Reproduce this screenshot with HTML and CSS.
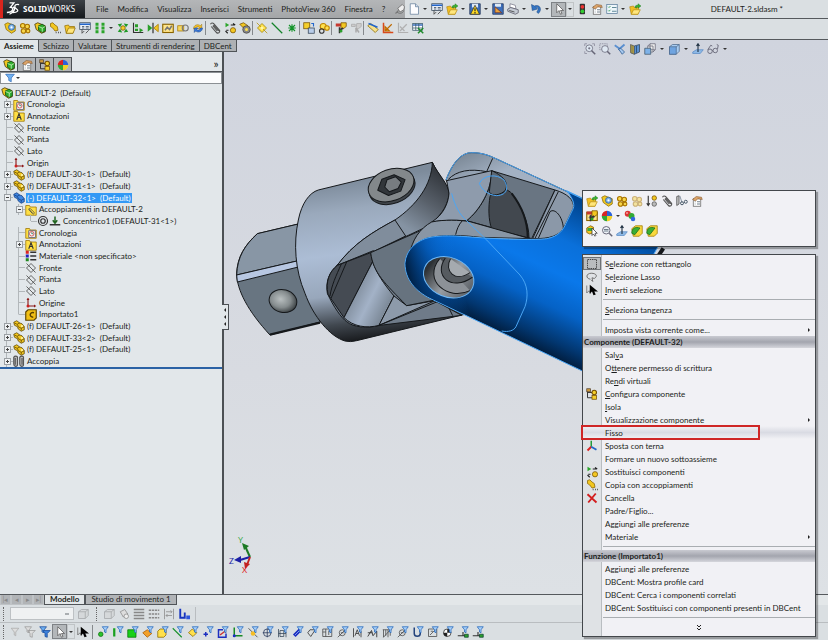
FILE: index.html
```
<!DOCTYPE html>
<html lang="it">
<head>
    <meta charset="UTF-8">
    <meta name="viewport" content="width=device-width, initial-scale=1.0">
    <title>DEFAULT-2.sldasm</title>
    <link rel="stylesheet" href="styles.css">
</head>
<body>
    <!-- icon sprite -->
    <svg class="sprite" aria-hidden="true">
        <symbol id="part" viewBox="0 0 16 16"><path d="M1 3l4-2 4 3 3 1 3 4v4l-4 2-4-3-1-3-4-2z" fill="#f2c720" stroke="#5a4300"/><path d="M2 4l4 2 1 3 4 2v3M6 5l3-1M11 11l4-2" fill="none" stroke="#5a4300"/><circle cx="12" cy="8" r="1.500" fill="#fff3a0"/></symbol>
        <symbol id="part-blue" viewBox="0 0 16 16"><path d="M1 3l4-2 4 3 3 1 3 4v4l-4 2-4-3-1-3-4-2z" fill="#3f86e0" stroke="#123c80"/><path d="M2 4l4 2 1 3 4 2v3M6 5l3-1M11 11l4-2" fill="none" stroke="#123c80"/></symbol>
        <symbol id="asm" viewBox="0 0 16 16"><path d="M1 3l4-2 10 4v8l-5 2-7-5z" fill="#f2c720" stroke="#3c3000"/><path d="M6 5l5-2 4 3v6l-4 2-5-3z" fill="#2fae2f" stroke="#0c4d10"/><path d="M6 6l5 2 4-2M11 8v5" fill="none" stroke="#d8f5c8"/></symbol>
        <symbol id="part-ring" viewBox="0 0 16 16"><path d="M1 3l4-2 10 4v7l-5 3-7-5z" fill="#f2c720" stroke="#8a6a00"/><circle cx="10" cy="7" r="4" fill="#7fb4ea" stroke="#28598f"/><circle cx="10" cy="7" r="1.500" fill="#fff"/></symbol>
        <symbol id="gears" viewBox="0 0 16 16"><g fill="#f7d64a" stroke="#a87400" stroke-width="1.500"><circle cx="5" cy="5" r="3"/><circle cx="11" cy="6" r="3"/><circle cx="6" cy="12" r="3"/><circle cx="12" cy="12" r="2.500"/></g></symbol>
        <symbol id="copy-part" viewBox="0 0 16 16"><path d="M2 2l3-1 3 3 3 2 1 5-4 1-3-4-3-2z" fill="#f2c720" stroke="#8a6400"/><path d="M9 14h1M12 14h1M15 14h1" stroke="#333" stroke-width="2"/></symbol>
        <symbol id="folder" viewBox="0 0 16 16"><path d="M1 5l5-1 1 2h7l-2 9H3z" fill="#f7c92c" stroke="#94700a"/><path d="M3 15l3-7h9l-3 7z" fill="#ffe67c" stroke="#94700a"/></symbol>
        <symbol id="folder-open" viewBox="0 0 16 16"><path d="M1 5l5-1 1 2h6l-1 9H3z" fill="#f3be21" stroke="#b8901c"/><path d="M3 15l3-6h9l-3 6z" fill="#ffe67c" stroke="#b8901c"/><path d="M8 6c0-3 2-3 4-3V1l4 3-4 3V5c-2 0-2 0-2 2z" fill="#38b32f" stroke="#136b13" stroke-width=".5"/></symbol>
        <symbol id="folder-a" viewBox="0 0 16 16"><path d="M1 2h5l1 2h8v11H1z" fill="#ffdf45" stroke="#997200"/><path d="M5 13l3-8 3 8M6 10h4" fill="none" stroke="#333" stroke-width="1.500"/></symbol>
        <symbol id="folder-clock" viewBox="0 0 16 16"><path d="M1 2h5l1 2h8v11H1z" fill="#ffdf45" stroke="#997200"/><rect x="5" y="5" width="9" height="9" fill="#eee" stroke="#557"/><circle cx="9" cy="9" r="3" fill="#fff" stroke="#c33"/><path d="M9 7v2h2" fill="none" stroke="#164"/></symbol>
        <symbol id="folder-clip" viewBox="0 0 16 16"><path d="M1 2h5l1 2h8v11H1z" fill="#ffdf45" stroke="#997200"/><path d="M5 7l5 6c3 1 3-2 1-3L7 6c-2-1-2 1-1 2l4 4" fill="none" stroke="#444"/></symbol>
        <symbol id="plane" viewBox="0 0 16 16"><path d="M2 2l12 12M8 2l6 6-6 6-6-6z" fill="none" stroke="#555" stroke-width="1.200"/></symbol>
        <symbol id="origin" viewBox="0 0 16 16"><path d="M4 2v10h9" fill="none" stroke="#8b1a1a" stroke-width="1.500"/><path d="M2 4l2-3 2 3zM12 10l3 2-3 2z" fill="#8b1a1a"/><circle cx="4" cy="12" r="2" fill="#c22"/></symbol>
        <symbol id="concentric" viewBox="0 0 16 16"><circle cx="8" cy="8" r="6" fill="none" stroke="#333" stroke-width="1.600"/><circle cx="8" cy="8" r="3" fill="none" stroke="#333" stroke-width="1.600"/></symbol>
        <symbol id="fixed" viewBox="0 0 16 16"><path d="M8 2v8M5 7l3 4 3-4" fill="none" stroke="#262" stroke-width="2"/><path d="M1 13h14" stroke="#333" stroke-width="2"/></symbol>
        <symbol id="material" viewBox="0 0 16 16"><rect x="1" y="1" width="4" height="4" fill="#d22"/><rect x="1" y="6" width="4" height="4" fill="#22b"/><rect x="1" y="11" width="4" height="4" fill="#282"/><path d="M7 3h8M7 8h8M7 13h8" stroke="#333" stroke-width="2"/></symbol>
        <symbol id="imported" viewBox="0 0 16 16"><path d="M1 4l3-3h11v11l-3 3H1z" fill="#f2c016" stroke="#5c4300" stroke-width="1.500"/><path d="M12 5c-6-2-7 6-1 6" fill="none" stroke="#5c4300" stroke-width="2"/></symbol>
        <symbol id="clips" viewBox="0 0 16 16"><path d="M1 12V3c1-2 5-2 5 0v10c0 3-5 3-5-1M3 4v9M9 12V3c1-2 5-2 5 0v10c0 3-5 3-5-1M12 4v9" fill="#bbb" stroke="#555" stroke-width="1.500"/></symbol>
        <symbol id="clip" viewBox="0 0 16 16"><path d="M2 3c1-2 3-2 4-1l8 9c1 3-2 5-4 3L3 6M5 5l6 7M6 4l7 8" fill="none" stroke="#555" stroke-width="1.500"/></symbol>
        <symbol id="props" viewBox="0 0 16 16"><rect x="3" y="5" width="10" height="10" fill="#fff" stroke="#666"/><path d="M5 9h1M8 9h4M5 12h1M8 12h4" stroke="#456"/><path d="M2 6l5-4 7 1 1 3-6-1-3 3z" fill="#dca46a" stroke="#7b4c20" stroke-width=".7"/></symbol>
        <symbol id="config" viewBox="0 0 16 16"><path d="M2 2v11h6M2 6h6" fill="none" stroke="#333" stroke-width="1.300"/><rect x="1" y="1" width="5" height="4" fill="#d09c3a" stroke="#543"/><circle cx="11" cy="6" r="3" fill="#f5cf2b" stroke="#765000" stroke-width="1.400"/><rect x="8" y="10" width="6" height="5" fill="#f5cf2b" stroke="#765000"/></symbol>
        <symbol id="ball" viewBox="0 0 16 16"><circle cx="8" cy="8" r="7" fill="#ddd"/><path d="M8 8V1a7 7 0 0 1 7 7z" fill="#2b63d9"/><path d="M8 8H1a7 7 0 0 1 7-7z" fill="#d92424"/><path d="M8 8v7a7 7 0 0 1-7-7z" fill="#32a736"/><path d="M8 8h7a7 7 0 0 1-7 7z" fill="#f2d028"/></symbol>
        <symbol id="balls" viewBox="0 0 16 16"><circle cx="5" cy="5" r="4" fill="#d33"/><circle cx="10" cy="8" r="4" fill="#3a3"/><circle cx="12" cy="12" r="3" fill="#36d"/><circle cx="4" cy="4" r="1" fill="#fff"/></symbol>
        <symbol id="window" viewBox="0 0 16 16"><rect x="1" y="1" width="14" height="9" fill="#e8eef7" stroke="#345"/><path d="M1 3h14" stroke="#26c" stroke-width="2"/><path d="M4 6h3M9 6h4M4 8h3M9 8h4" stroke="#345"/><path d="M4 10v5l3-3M9 15l4-4" fill="none" stroke="#333"/></symbol>
        <symbol id="pattern" viewBox="0 0 16 16"><g fill="#2ba52b"><rect x="2" y="1" width="4" height="4"/><rect x="10" y="1" width="4" height="4"/><rect x="2" y="6" width="4" height="4"/><rect x="10" y="6" width="4" height="4"/><rect x="2" y="11" width="4" height="4"/><rect x="10" y="11" width="4" height="4"/></g></symbol>
        <symbol id="explode" viewBox="0 0 16 16"><circle cx="8" cy="8" r="3" fill="#f5cf2b" stroke="#765000"/><path d="M1 3l6-1-3 5zM15 3l-6-1 3 5zM1 13l6 1-3-5zM15 13l-6 1 3-5z" fill="#1f9a27"/></symbol>
        <symbol id="step" viewBox="0 0 16 16"><path d="M2 1v13h13" fill="none" stroke="#333" stroke-width="1.500"/><path d="M4 3h4v4H4zM10 8l5 3-5 3zM4 9h4v3H4z" fill="#2a9f2a"/></symbol>
        <symbol id="mirror" viewBox="0 0 16 16"><path d="M8 1v14" stroke="#222" stroke-width="1.500"/><path d="M1 3l6 5-6 5z" fill="#2a9f2a"/><path d="M15 3L9 8l6 5z" fill="#f3c722" stroke="#a87800"/></symbol>
        <symbol id="frame" viewBox="0 0 16 16"><rect x="1" y="3" width="14" height="11" fill="#ffe58a" stroke="#8a6400" stroke-width="1.500"/><path d="M4 11l3-4 3 3 3-5" fill="none" stroke="#777" stroke-width="2"/></symbol>
        <symbol id="link" viewBox="0 0 16 16"><rect x="1" y="5" width="8" height="7" fill="#f6d85f" stroke="#a87800"/><circle cx="11" cy="8" r="4" fill="none" stroke="#777" stroke-width="1.500"/></symbol>
        <symbol id="refresh" viewBox="0 0 16 16"><path d="M2 9c0-5 6-7 9-4l2-2v6H8l2-2C7 5 5 7 5 9z" fill="#f5c42b" stroke="#875d00" stroke-width=".6"/><path d="M14 8c0 5-6 7-9 4l-2 2V8h5l-2 2c3 2 5 0 5-2z" fill="#3a78d8" stroke="#123c80" stroke-width=".6"/></symbol>
        <symbol id="replace" viewBox="0 0 16 16"><path d="M2 1l5 3-5 3z" fill="#2aa52a"/><path d="M9 4h5M12 2l3 2M3 11h3M5 15l-3-3" stroke="#222" stroke-width="1.500"/><circle cx="12" cy="11" r="3.500" fill="#f3c722" stroke="#765000"/></symbol>
        <symbol id="wheel" viewBox="0 0 16 16"><path d="M1 3l5-2 6 4-6 3z" fill="#f2c720" stroke="#765000"/><circle cx="10" cy="10" r="5" fill="#888" stroke="#444"/><circle cx="10" cy="10" r="2" fill="#ffe14d"/></symbol>
        <symbol id="tag" viewBox="0 0 16 16"><path d="M8 2l6 6-6 6-6-6z" fill="#ffe14d" stroke="#9a7d00"/><path d="M1 1l14 14" stroke="#b08f00"/><circle cx="8" cy="8" r="2" fill="#fff7a8"/></symbol>
        <symbol id="line" viewBox="0 0 16 16"><path d="M1 1l14 14" stroke="#13832a" stroke-width="1.600"/></symbol>
        <symbol id="star" viewBox="0 0 16 16"><path d="M8 3v10M3 8h10M4 4l8 8M12 4l-8 8" stroke="#13932a" stroke-width="1.500"/></symbol>
        <symbol id="twobox" viewBox="0 0 16 16"><rect x="1" y="1" width="8" height="8" fill="#f5cf2b" stroke="#765000"/><rect x="7" y="8" width="8" height="7" fill="#b8cdea" stroke="#345"/><path d="M11 2h3v4" fill="none" stroke="#26c" stroke-width="1.500"/></symbol>
        <symbol id="rings" viewBox="0 0 16 16"><g fill="#ffe14d" stroke="#c08600" stroke-width="1.500"><circle cx="7" cy="6" r="4"/><circle cx="12" cy="8" r="3"/></g><circle cx="5" cy="12" r="3" fill="none" stroke="#333" stroke-width="1.500"/></symbol>
        <symbol id="tree-y" viewBox="0 0 16 16"><path d="M1 2h7v4H1z" fill="#c6382f"/><path d="M8 1h7v5l-4 3H8z" fill="#f3c722" stroke="#765000"/><path d="M6 7v8M6 11l5-3" stroke="#333" stroke-width="2"/><circle cx="8" cy="12" r="2" fill="#2a9f2a"/></symbol>
        <symbol id="tree-grey" viewBox="0 0 16 16"><path d="M9 2h6v4l-4 3H8zM2 3h5v3H2z" fill="#ccc" stroke="#aaa"/><path d="M8 8l4 6M8 8v6" stroke="#aaa" stroke-width="2"/></symbol>
        <symbol id="ruler" viewBox="0 0 16 16"><path d="M1 5l4-3 10 8-4 4z" fill="#f6e18a" stroke="#876900"/><path d="M2 2l12 5" stroke="#26c" stroke-width="2"/></symbol>
        <symbol id="angle" viewBox="0 0 16 16"><path d="M2 1v13h13" fill="none" stroke="#d84a1b" stroke-width="2"/><path d="M4 12L13 3M4 12V6l6 6z" fill="#f6b42b" stroke="#bf6a00" stroke-width="1.500"/></symbol>
        <symbol id="angle-grey" viewBox="0 0 16 16"><path d="M2 1v13h13M4 12l9-9M4 6l6 6" fill="none" stroke="#b0b0b0" stroke-width="1.600"/></symbol>
        <symbol id="table" viewBox="0 0 16 16"><rect x="1" y="2" width="13" height="9" fill="#fff" stroke="#356"/><path d="M1 4h13" stroke="#3a6fc0" stroke-width="2"/><path d="M5 2v9M9 2v9M1 8h13" stroke="#356"/><path d="M8 8l7 7M15 8l-7 7" stroke="#1f8b2c" stroke-width="2"/></symbol>
        <symbol id="doc" viewBox="0 0 16 16"><path d="M3 1h7l4 4v10H3z" fill="#fdfdff" stroke="#67809c"/><path d="M10 1v4h4" fill="#cfdcec" stroke="#67809c"/></symbol>
        <symbol id="save-warn" viewBox="0 0 16 16"><path d="M1 1h14v14H1z" fill="#3d6fbb" stroke="#235"/><path d="M4 1h8v5H4z" fill="#dce8f5"/><path d="M8 3l6 12H2z" fill="#ffdb24" stroke="#333"/><path d="M8 7v4M8 12v2" stroke="#222" stroke-width="1.500"/></symbol>
        <symbol id="save-edit" viewBox="0 0 16 16"><path d="M1 1h14v14H1z" fill="#3d6fbb" stroke="#235"/><path d="M4 1h8v4H4z" fill="#dce8f5"/><path d="M4 5l9 8H4z" fill="#e9a03a" stroke="#633"/></symbol>
        <symbol id="print" viewBox="0 0 16 16"><path d="M4 1l7 2 1 5-8-2z" fill="#fff" stroke="#778"/><path d="M1 8l4-2 10 3v4l-4 2L1 11z" fill="#c5cbd4" stroke="#556"/><path d="M3 10l7 2" stroke="#333"/></symbol>
        <symbol id="undo" viewBox="0 0 16 16"><path d="M2 2l1 8 7-2-2-2c3-1 4 2 1 6l2 2C17 9 13 1 6 4z" fill="#3475c4" stroke="#1c4680" stroke-width=".7"/></symbol>
        <symbol id="arrow" viewBox="0 0 16 16"><path d="M5 1v12l3-3 2 5 2-1-2-4h4z" fill="#fff" stroke="#555"/></symbol>
        <symbol id="arrow-black" viewBox="0 0 16 16"><path d="M1 2v10l3-3 2 4" fill="none" stroke="#666"/><path d="M5 1v12l3-3 2 5 3-1-2-4h5z" fill="#000"/></symbol>
        <symbol id="traffic" viewBox="0 0 16 16"><rect x="5" y="1" width="7" height="14" rx="1" fill="#333"/><circle cx="8.500" cy="5" r="2.500" fill="#e33"/><circle cx="8.500" cy="11" r="2.500" fill="#3c3"/></symbol>
        <symbol id="checklist" viewBox="0 0 16 16"><rect x="1" y="2" width="14" height="12" fill="#eef6fb" stroke="#5c7e9c"/><path d="M3 5l1 1 2-2M3 10l1 1 2-2" fill="none" stroke="#183"/><path d="M8 6h6M8 11h6" stroke="#367"/></symbol>
        <symbol id="pin" viewBox="0 0 16 16"><path d="M2 14l4-4" stroke="#777" stroke-width="1.500"/><path d="M5 7l6-5 3 3-1 4-5 3z" fill="#eee" stroke="#666"/><path d="M4 12c3 3 8 2 9-2" fill="none" stroke="#666"/></symbol>
        <symbol id="zoom-fit" viewBox="0 0 16 16"><path d="M1 4V1h3M11 1h3v3M1 11v3h3" fill="none" stroke="#889"/><circle cx="7" cy="7" r="4.500" fill="#dfe8f2" stroke="#667"/><circle cx="7" cy="7" r="1.500" fill="#778"/><path d="M10 10l5 5" stroke="#667" stroke-width="2"/></symbol>
        <symbol id="zoom-list" viewBox="0 0 16 16"><circle cx="7" cy="7" r="5" fill="#eef2f8" stroke="#667" stroke-width="1.300"/><path d="M4 6h6M4 8h6" stroke="#456"/><path d="M11 11l4 4" stroke="#667" stroke-width="2"/></symbol>
        <symbol id="zoom-area" viewBox="0 0 16 16"><path d="M1 1h10v8H1z" fill="none" stroke="#889" stroke-dasharray="2 1"/><circle cx="8" cy="8" r="4.500" fill="#dfe8f2" stroke="#667"/><path d="M11 11l4 4" stroke="#667" stroke-width="2"/></symbol>
        <symbol id="wand" viewBox="0 0 16 16"><path d="M1 3l7 5M14 2L6 9" stroke="#5a8fd0" stroke-width="2.500"/><path d="M6 8l3-1 5 5-3 3z" fill="#a6c8ee" stroke="#28568c"/></symbol>
        <symbol id="section" viewBox="0 0 16 16"><path d="M2 2l5 2v11l-5-2z" fill="#e5bf3b" stroke="#555"/><path d="M7 4l7-2v10l-7 3z" fill="#5a8fd0" stroke="#345"/><path d="M4 3v11M10 4v9" stroke="#246"/></symbol>
        <symbol id="cube" viewBox="0 0 16 16"><path d="M2 5l4-3h9v9l-4 4H2z" fill="#a9cdf2" stroke="#4d6a8c"/><path d="M2 5h9v10H2z" fill="#6fa4e0" stroke="#4d6a8c"/><path d="M11 5l4-3" stroke="#4d6a8c"/></symbol>
        <symbol id="views" viewBox="0 0 16 16"><path d="M5 4l3-3h7v8l-3 3H5z" fill="#eee" stroke="#667"/><path d="M5 4h7v8M8 1v8h7" fill="none" stroke="#667"/><path d="M1 7h8v8H1z" fill="#7eb2e8" stroke="#456"/></symbol>
        <symbol id="normal" viewBox="0 0 16 16"><path d="M1 12l5-3h9l-4 5H1z" fill="#8db9e6" stroke="#5c8cc6"/><path d="M8 12V2M6 4l2-3 2 3" fill="none" stroke="#234" stroke-width="1.500"/></symbol>
        <symbol id="glasses" viewBox="0 0 16 16"><g fill="none" stroke="#667" stroke-width="1.200"><circle cx="4" cy="11" r="3"/><circle cx="11" cy="10" r="3"/><path d="M1 9l4-6 2 1M14 8l1-5-2-1M7 10h1"/></g></symbol>
        <symbol id="hide" viewBox="0 0 16 16"><path d="M1 2l3-1v11l-3 2z" fill="#ccc" stroke="#444"/><path d="M5 1l3 9" stroke="#678"/><circle cx="8" cy="11" r="2" fill="none" stroke="#456" stroke-width="1.300"/><circle cx="13" cy="9" r="2" fill="none" stroke="#456" stroke-width="1.300"/></symbol>
        <symbol id="swap" viewBox="0 0 16 16"><path d="M3 1v12M1 11l2 3 2-3" fill="none" stroke="#333" stroke-width="1.500"/><circle cx="11" cy="4" r="3" fill="#f2c720" stroke="#765000"/><circle cx="11" cy="12" r="3" fill="#bbb" stroke="#555"/></symbol>
        <symbol id="select-part" viewBox="0 0 16 16"><path d="M1 4l5-3 4 2v7l-5 2-4-2z" fill="#f2c720" stroke="#765000"/><path d="M2 4h6v4H2z" fill="#39a83a"/><path d="M8 4v10l2-2 2 3 1-1-1-3h3z" fill="#fff" stroke="#333"/></symbol>
        <symbol id="green-part" viewBox="0 0 16 16"><path d="M1 5l5-4h9v10l-4 4H3z" fill="#f8d83e" stroke="#a07a00"/><path d="M1 11C1 4 6 2 12 4L5 13z" fill="#39ae35" stroke="#186b1b"/></symbol>
        <symbol id="marquee" viewBox="0 0 16 16"><rect x="2" y="2" width="12" height="12" fill="none" stroke="#222" stroke-dasharray="2 1"/></symbol>
        <symbol id="lasso" viewBox="0 0 16 16"><path d="M6 11C-1 10 0 3 7 3s9 4 4 7L8 9l1 5-2-2" fill="none" stroke="#666" stroke-width="1.200"/></symbol>
        <symbol id="triad" viewBox="0 0 16 16"><path d="M7 9V1" stroke="#229b39" stroke-width="2"/><path d="M7 9l-5 5" stroke="#d22" stroke-width="2.500"/><path d="M7 9l7 4" stroke="#2467c8" stroke-width="2.500"/></symbol>
        <symbol id="cross" viewBox="0 0 16 16"><path d="M2 3l12 11M13 2L3 14" stroke="#d21e1e" stroke-width="2.500"/></symbol>
        <symbol id="funnel" viewBox="0 0 16 16"><path d="M1 2h14L10 8v6l-4-2V8z" fill="#6fb1f2" stroke="#1e5cab"/></symbol>
        <symbol id="funnel-grey" viewBox="0 0 16 16"><path d="M3 3h10L9 8v5l-2-1V8z" fill="#ddd" stroke="#aaa"/></symbol>
        <symbol id="funnels" viewBox="0 0 16 16"><path d="M1 1h9L7 5v4L4 8V5z" fill="#6fb1f2" stroke="#17499a"/><path d="M5 6h10l-4 4v5l-3-1v-4z" fill="#3a7fd9" stroke="#17499a"/></symbol>
        <symbol id="funnels-grey" viewBox="0 0 16 16"><path d="M1 1h9L7 5v4L4 8V5zM5 6h10l-4 4v5l-3-1v-4z" fill="#ddd" stroke="#999"/></symbol>
        <!-- small filter that sits on the upper right of each filter button -->
        <symbol id="f" viewBox="0 0 16 16"><path d="M7 1h8l-3 4v4l-2-1V5z" fill="#a9d1fa" stroke="#2265bb"/></symbol>
        <symbol id="s-dot" viewBox="0 0 16 16"><circle cx="5" cy="11" r="3" fill="#2cc42c" stroke="#107010"/></symbol>
        <symbol id="s-edge" viewBox="0 0 16 16"><path d="M3 3v11" stroke="#19a01e" stroke-width="3"/></symbol>
        <symbol id="s-face" viewBox="0 0 16 16"><path d="M1 5h11v10H1z" fill="#18d018" stroke="#087008"/></symbol>
        <symbol id="s-surf" viewBox="0 0 16 16"><path d="M1 9l6-4 6 5-6 5z" fill="#f2a02a" stroke="#a85a00"/></symbol>
        <symbol id="s-body" viewBox="0 0 16 16"><path d="M1 7l3-3h8v8l-3 3H1z" fill="#ffe04a" stroke="#8a6a00"/></symbol>
        <symbol id="s-line" viewBox="0 0 16 16"><path d="M1 3l12 12" stroke="#19902a" stroke-width="1.500"/></symbol>
        <symbol id="s-plane" viewBox="0 0 16 16"><path d="M7 4l6 5-5 5-6-5z" fill="#ffe04a" stroke="#8a6a00"/></symbol>
        <symbol id="s-point" viewBox="0 0 16 16"><path d="M5 8v6M2 11h6" stroke="#1d2fc0" stroke-width="2"/></symbol>
        <symbol id="s-sketch" viewBox="0 0 16 16"><path d="M8 5H2v10h10v-5" fill="none" stroke="#1d2fc0" stroke-width="2"/><path d="M4 12l8-6" stroke="#c33" stroke-width="2"/></symbol>
        <symbol id="s-axes" viewBox="0 0 16 16"><path d="M3 2v11h11" fill="none" stroke="#178a22" stroke-width="2"/><circle cx="3" cy="13" r="2" fill="#1d2fc0"/></symbol>
        <symbol id="s-mid" viewBox="0 0 16 16"><path d="M2 3l12 12" stroke="#333"/><circle cx="8" cy="10" r="3" fill="#f5bd23"/></symbol>
        <symbol id="s-target" viewBox="0 0 16 16"><circle cx="7" cy="9" r="5" fill="none" stroke="#235"/><path d="M7 3v12M1 9h12" stroke="#235"/></symbol>
        <symbol id="s-dim" viewBox="0 0 16 16"><path d="M2 4v11M2 10h10M12 8v7M4 6h5v8H4z" fill="none" stroke="#345"/></symbol>
        <symbol id="s-pen" viewBox="0 0 16 16"><path d="M3 13l8-8" stroke="#1d2fc0" stroke-width="5"/><path d="M4 12l7-7" stroke="#9bf"/></symbol>
        <symbol id="s-check" viewBox="0 0 16 16"><path d="M1 9l4 5 6-9H4z" fill="none" stroke="#444" stroke-width="1.200"/></symbol>
        <symbol id="s-note" viewBox="0 0 16 16"><path d="M1 4h12v10H1zM5 4v10M9 6v6M1 8h4" fill="none" stroke="#444"/></symbol>
        <symbol id="s-bal" viewBox="0 0 16 16"><circle cx="7" cy="9" r="4" fill="none" stroke="#444"/><path d="M1 15l11-11M5 9h4" stroke="#444"/></symbol>
        <symbol id="s-datum" viewBox="0 0 16 16"><path d="M2 3v12M4 13l3-8 3 8M5 10h4M12 7v8" fill="none" stroke="#444" stroke-width="1.200"/></symbol>
        <symbol id="s-weld" viewBox="0 0 16 16"><path d="M1 14l5-8 2 7 5-6v8M1 9h6" fill="none" stroke="#333" stroke-width="1.200"/></symbol>
        <symbol id="s-hatch" viewBox="0 0 16 16"><path d="M1 5h12M2 5v10M5 5v8M8 5v10M11 5v8M2 15l9-10" fill="none" stroke="#444"/></symbol>
        <symbol id="s-u" viewBox="0 0 16 16"><path d="M3 2v8c0 5 8 5 8 0V6" fill="none" stroke="#24447c" stroke-width="2"/></symbol>
        <symbol id="s-box" viewBox="0 0 16 16"><path d="M2 4h11v10H2zM4 12l6-6M5 7h3" fill="none" stroke="#444"/></symbol>
        <symbol id="s-mass" viewBox="0 0 16 16"><circle cx="7" cy="9" r="5" fill="#fff" stroke="#222"/><path d="M7 4a5 5 0 0 1 5 5H7zM7 14a5 5 0 0 1-5-5h5z" fill="#222"/></symbol>
        <symbol id="s-conn" viewBox="0 0 16 16"><path d="M1 13h11M8 8v5" stroke="#333" stroke-width="1.500"/><path d="M10 11h5v4h-5z" fill="#2ba12b" stroke="#143"/></symbol>
        <symbol id="cube-grey" viewBox="0 0 16 16"><path d="M2 5l4-3h9v8l-4 4H2zM2 5h9v9M11 5l4-3" fill="#d5d8da" stroke="#a3a6a8"/></symbol>
        <symbol id="paint" viewBox="0 0 16 16"><path d="M3 5l6-3 4 6-6 4z" fill="#ddd" stroke="#888"/><circle cx="11" cy="11" r="3" fill="#eee" stroke="#888"/></symbol>
        <symbol id="lines" viewBox="0 0 16 16"><path d="M1 2h14M1 6h14M1 10h14M1 14h14" stroke="#888" stroke-width="2"/></symbol>
        <symbol id="dashes" viewBox="0 0 16 16"><path d="M1 3h14M1 8h14M1 13h14" stroke="#888" stroke-width="2" stroke-dasharray="3 1"/></symbol>
        <symbol id="fit" viewBox="0 0 16 16"><path d="M2 1v14M14 1v14M4 5h8M4 10h8M10 3l2 2-2 2M6 8l-2 2 2 2" fill="none" stroke="#888"/></symbol>
        <symbol id="ucs" viewBox="0 0 16 16"><path d="M3 1v12h6V6" fill="none" stroke="#1735c0" stroke-width="2.500"/><path d="M11 10h5v5h-5z" fill="#2e57dd"/></symbol>
    </svg>

    <header class="titlebar">
        <div class="logo">
            <svg viewBox="0 0 16 16" aria-hidden="true"><path d="M4 1h5L5 6c5 0 3 6-4 6M8 6c4 0 1 6-4 8M15 3c-6-1-6 3-3 5s1 4-4 4" fill="none" stroke="#fff" stroke-width="1.500"/></svg>
            <span><b>SOLID</b>WORKS</span>
        </div>
        <nav class="menubar">
            <button>File</button>
            <button>Modifica</button>
            <button>Visualizza</button>
            <button>Inserisci</button>
            <button>Strumenti</button>
            <button>PhotoView 360</button>
            <button>Finestra</button>
            <button>?</button>
            <button aria-label="Blocca menu"><svg class="icon"><use href="#pin"/></svg></button>
        </nav>
        <div class="toolbar quick">
            <button aria-label="Nuovo"><svg class="icon"><use href="#doc"/></svg></button>
            <button class="drop" aria-label="Altro"></button>
            <button aria-label="Finestra documento"><svg class="icon"><use href="#window"/></svg></button>
            <button aria-label="Apri"><svg class="icon"><use href="#folder-open"/></svg></button>
            <button class="drop" aria-label="Altro"></button>
            <button aria-label="Salva"><svg class="icon"><use href="#save-warn"/></svg></button>
            <button class="drop" aria-label="Altro"></button>
            <button aria-label="Salva con nome"><svg class="icon"><use href="#save-edit"/></svg></button>
            <button aria-label="Stampa"><svg class="icon"><use href="#print"/></svg></button>
            <button class="drop" aria-label="Altro"></button>
            <button aria-label="Annulla"><svg class="icon"><use href="#undo"/></svg></button>
            <button class="drop" aria-label="Altro"></button>
            <button class="pressed" aria-label="Seleziona"><svg class="icon"><use href="#arrow"/></svg></button>
            <button class="drop boxed" aria-label="Altro"></button>
            <button aria-label="Ricostruisci"><svg class="icon"><use href="#traffic"/></svg></button>
            <button aria-label="Proprietà"><svg class="icon"><use href="#props"/></svg></button>
            <button aria-label="Opzioni"><svg class="icon"><use href="#checklist"/></svg></button>
            <button class="drop" aria-label="Altro"></button>
            <button aria-label="Apri cartella"><svg class="icon"><use href="#folder-open"/></svg></button>
        </div>
        <h1>DEFAULT-2.sldasm *</h1>
    </header>

    <div class="toolbar assembly">
        <button aria-label="Inserisci componente"><svg class="icon"><use href="#part-ring"/></svg></button>
        <button aria-label="Nuova parte"><svg class="icon"><use href="#gears"/></svg></button>
        <button aria-label="Nuovo assieme"><svg class="icon"><use href="#asm"/></svg></button>
        <button aria-label="Copia con accoppiamenti"><svg class="icon"><use href="#copy-part"/></svg></button>
        <button aria-label="Apri parte"><svg class="icon"><use href="#folder"/></svg></button>
        <button aria-label="Finestra"><svg class="icon"><use href="#window"/></svg></button>
        <button aria-label="Ripetizione"><svg class="icon"><use href="#pattern"/></svg></button>
        <button class="drop" aria-label="Altro"></button>
        <button aria-label="Vista esplosa"><svg class="icon"><use href="#explode"/></svg></button>
        <button aria-label="Schizzo linee"><svg class="icon"><use href="#step"/></svg></button>
        <button aria-label="Specchia"><svg class="icon"><use href="#mirror"/></svg></button>
        <button aria-label="Interferenza"><svg class="icon"><use href="#frame"/></svg></button>
        <button aria-label="Collega"><svg class="icon"><use href="#link"/></svg></button>
        <button aria-label="Aggiorna"><svg class="icon"><use href="#refresh"/></svg></button>
        <span class="sep"></span>
        <button aria-label="Accoppia"><svg class="icon"><use href="#clip"/></svg></button>
        <button aria-label="Sostituisci"><svg class="icon"><use href="#replace"/></svg></button>
        <button aria-label="Ruota"><svg class="icon"><use href="#wheel"/></svg></button>
        <span class="sep"></span>
        <button aria-label="Piano"><svg class="icon"><use href="#tag"/></svg></button>
        <button aria-label="Asse"><svg class="icon"><use href="#line"/></svg></button>
        <button aria-label="Punto"><svg class="icon"><use href="#star"/></svg></button>
        <span class="sep"></span>
        <button aria-label="Sposta"><svg class="icon"><use href="#twobox"/></svg></button>
        <button aria-label="Rotazione"><svg class="icon"><use href="#rings"/></svg></button>
        <span class="sep"></span>
        <button aria-label="Esplodi"><svg class="icon"><use href="#tree-y"/></svg></button>
        <button aria-label="Linee esplose" disabled><svg class="icon"><use href="#tree-grey"/></svg></button>
        <span class="sep"></span>
        <button aria-label="Misura"><svg class="icon"><use href="#ruler"/></svg></button>
        <button aria-label="Schizzo"><svg class="icon"><use href="#angle"/></svg></button>
        <button aria-label="Schizzo 3D" disabled><svg class="icon"><use href="#angle-grey"/></svg></button>
        <button aria-label="Tabella"><svg class="icon"><use href="#table"/></svg></button>
    </div>

    <main class="workspace">
        <aside class="side">
            <div class="command-tabs">
                <button class="active">Assieme</button>
                <button>Schizzo</button>
                <button>Valutare</button>
                <button>Strumenti di rendering</button>
                <button>DBCent</button>
            </div>
            <div class="panel">
                <div class="panel-tabs">
                    <button class="active" aria-label="Albero"><svg class="icon"><use href="#asm"/></svg></button>
                    <button aria-label="Proprietà"><svg class="icon"><use href="#props"/></svg></button>
                    <button aria-label="Configurazioni"><svg class="icon"><use href="#config"/></svg></button>
                    <button aria-label="Aspetti"><svg class="icon"><use href="#ball"/></svg></button>
                    <button class="expand">»</button>
                </div>
                <label class="filter">
                    <svg class="icon"><use href="#funnel"/></svg>
                    <span class="caret"></span>
                    <input type="text" aria-label="Filtro">
                </label>
                <ul class="tree">
                    <li><svg class="icon"><use href="#asm"/></svg><span>DEFAULT-2&nbsp; (Default)</span></li>
                    <li><button class="node plus" aria-label="Espandi"></button><svg class="icon"><use href="#folder-clock"/></svg><span>Cronologia</span></li>
                    <li><button class="node plus" aria-label="Espandi"></button><svg class="icon"><use href="#folder-a"/></svg><span>Annotazioni</span></li>
                    <li><i class="node"></i><svg class="icon"><use href="#plane"/></svg><span>Fronte</span></li>
                    <li><i class="node"></i><svg class="icon"><use href="#plane"/></svg><span>Pianta</span></li>
                    <li><i class="node"></i><svg class="icon"><use href="#plane"/></svg><span>Lato</span></li>
                    <li><i class="node"></i><svg class="icon"><use href="#origin"/></svg><span>Origin</span></li>
                    <li><button class="node plus" aria-label="Espandi"></button><svg class="icon"><use href="#part"/></svg><span>(f) DEFAULT-30&lt;1&gt;&nbsp; (Default)</span></li>
                    <li><button class="node plus" aria-label="Espandi"></button><svg class="icon"><use href="#part"/></svg><span>(f) DEFAULT-31&lt;1&gt;&nbsp; (Default)</span></li>
                    <li><button class="node minus" aria-label="Comprimi"></button><svg class="icon"><use href="#part-blue"/></svg><span class="selected">(-) DEFAULT-32&lt;1&gt;&nbsp; (Default)</span></li>
                    <li><i class="guide"></i><button class="node minus" aria-label="Comprimi"></button><svg class="icon"><use href="#folder-clip"/></svg><span>Accoppiamenti in DEFAULT-2</span></li>
                    <li><i class="guide"></i><i class="guide"></i><i class="node last"></i><svg class="icon"><use href="#concentric"/></svg><svg class="icon"><use href="#fixed"/></svg><span>Concentrico1 (DEFAULT-31&lt;1&gt;)</span></li>
                    <li><i class="guide"></i><i class="node"></i><svg class="icon"><use href="#folder-clock"/></svg><span>Cronologia</span></li>
                    <li><i class="guide"></i><button class="node plus" aria-label="Espandi"></button><svg class="icon"><use href="#folder-a"/></svg><span>Annotazioni</span></li>
                    <li><i class="guide"></i><i class="node"></i><svg class="icon"><use href="#material"/></svg><span>Materiale &lt;non specificato&gt;</span></li>
                    <li><i class="guide"></i><i class="node"></i><svg class="icon"><use href="#plane"/></svg><span>Fronte</span></li>
                    <li><i class="guide"></i><i class="node"></i><svg class="icon"><use href="#plane"/></svg><span>Pianta</span></li>
                    <li><i class="guide"></i><i class="node"></i><svg class="icon"><use href="#plane"/></svg><span>Lato</span></li>
                    <li><i class="guide"></i><i class="node"></i><svg class="icon"><use href="#origin"/></svg><span>Origine</span></li>
                    <li><i class="guide"></i><i class="node last"></i><svg class="icon"><use href="#imported"/></svg><span>Importato1</span></li>
                    <li><button class="node plus" aria-label="Espandi"></button><svg class="icon"><use href="#part"/></svg><span>(f) DEFAULT-26&lt;1&gt;&nbsp; (Default)</span></li>
                    <li><button class="node plus" aria-label="Espandi"></button><svg class="icon"><use href="#part"/></svg><span>(f) DEFAULT-33&lt;2&gt;&nbsp; (Default)</span></li>
                    <li><button class="node plus" aria-label="Espandi"></button><svg class="icon"><use href="#part"/></svg><span>(f) DEFAULT-25&lt;1&gt;&nbsp; (Default)</span></li>
                    <li><button class="node plus" aria-label="Espandi"></button><svg class="icon"><use href="#clips"/></svg><span>Accoppia</span></li>
                </ul>
            </div>
            <button class="collapse" aria-label="Chiudi pannello"><i></i><i></i><i></i></button>
        </aside>

        <section class="viewport">
            <svg class="model" viewBox="224 40 604 555" preserveAspectRatio="xMinYMin slice" role="img" aria-label="Giunto cardanico">
                <defs>
                    <linearGradient id="yoke" gradientUnits="userSpaceOnUse" x1="360" y1="120" x2="420" y2="600"><stop offset="0" stop-color="#7d8b9b"/><stop offset=".18" stop-color="#9aa9bc"/><stop offset=".45" stop-color="#acbdd5"/><stop offset=".7" stop-color="#98a7bb"/><stop offset=".88" stop-color="#414850"/><stop offset="1" stop-color="#17191c"/></linearGradient>
                    <linearGradient id="ear" gradientUnits="userSpaceOnUse" x1="650" y1="110" x2="540" y2="270"><stop offset="0" stop-color="#32363c"/><stop offset=".5" stop-color="#59616b"/><stop offset="1" stop-color="#8593a3"/></linearGradient>
                    <linearGradient id="bore" gradientUnits="userSpaceOnUse" x1="350" y1="440" x2="470" y2="500"><stop offset="0" stop-color="#707c89"/><stop offset=".6" stop-color="#a3b2c7"/><stop offset="1" stop-color="#7e8b9a"/></linearGradient>
                    <linearGradient id="top" gradientUnits="userSpaceOnUse" x1="700" y1="40" x2="740" y2="130"><stop offset="0" stop-color="#7b8896"/><stop offset="1" stop-color="#a3b1c3"/></linearGradient>
                    <linearGradient id="blue" gradientUnits="userSpaceOnUse" x1="1010" y1="170" x2="800" y2="610"><stop offset="0" stop-color="#004590"/><stop offset=".25" stop-color="#0a70da"/><stop offset=".45" stop-color="#0a78ea"/><stop offset=".65" stop-color="#0562c6"/><stop offset=".84" stop-color="#02366f"/><stop offset="1" stop-color="#000a18"/></linearGradient>
                    <linearGradient id="nose" gradientUnits="userSpaceOnUse" x1="535" y1="430" x2="690" y2="395"><stop offset="0" stop-color="#001c3c"/><stop offset=".5" stop-color="#0352a8" stop-opacity=".5"/><stop offset="1" stop-color="#0a78ea" stop-opacity="0"/></linearGradient>
                    <linearGradient id="hole" gradientUnits="userSpaceOnUse" x1="590" y1="400" x2="730" y2="440"><stop offset="0" stop-color="#2d3135"/><stop offset=".5" stop-color="#989da3"/><stop offset="1" stop-color="#5b6066"/></linearGradient>
                    <radialGradient id="sphere" cx=".4" cy=".45" r=".6"><stop offset="0" stop-color="#b9bfc0"/><stop offset=".6" stop-color="#858c8e"/><stop offset="1" stop-color="#3d4346"/></radialGradient>
                </defs>
                <g transform="translate(230 140) scale(.33333)" stroke="#15181b" stroke-width="3" stroke-linejoin="round" fill="none">
                    <!-- square shank -->
                    <path d="M82 281L205 252L275 545L120 585C55 515 20 450 20 400C22 350 45 315 82 281Z" fill="#687581"/>
                    <path d="M82 281L205 252V362L20 405C22 350 45 315 82 281Z" fill="#8896a5"/>
                    <path d="M20 405L205 362V381L22 426Z" fill="#b7c7e2"/>
                    <path d="M120 584L270 548" stroke-width="7"/>
                    <ellipse cx="159" cy="483" rx="42" ry="34" fill="url(#sphere)" transform="rotate(15 159 483)"/>
                    <!-- left yoke -->
                    <path d="M607 67L265 150C238 158 215 190 205 240C190 310 195 390 225 460C250 530 300 590 345 603Q360 607 380 602L700 524L640 470L580 262C640 230 655 190 657 160C650 130 625 105 607 67Z" fill="url(#yoke)"/>
                    <path d="M607 67C625 105 655 130 657 160C655 200 625 240 580 265L430 335L320 378C370 310 430 275 495 240C560 195 605 135 607 67Z" fill="url(#ear)"/>
                    <path d="M320 378C370 310 430 275 495 240L527 288L430 335Z" fill="#808d9c"/>
                    <path d="M322 376C298 395 286 425 292 460C310 500 335 535 350 545C370 562 410 566 450 556L695 526L610 480L430 332Z" fill="#6f7b89"/>
                    <path d="M322 376L422 338L428 365L342 533L294 463C286 425 298 395 322 376Z" fill="#454b53"/>
                    <path d="M334 372C318 408 305 435 300 468M350 366L303 475"/>
                    <path d="M428 365L342 533C370 560 410 566 447 556L492 468C460 430 440 400 428 365Z" fill="url(#bore)"/>
                    <path d="M492 468L530 497L615 482L447 556Z" fill="#8d9aaa"/>
                    <path d="M655 500L668 527M447 556L625 484"/>
                    <path d="M422 338L580 268L640 300L615 480L530 497C465 430 430 400 422 338Z" fill="#67737f"/>
                    <!-- screw -->
                    <g transform="rotate(-20 484 137)">
                        <ellipse cx="484" cy="144" rx="71" ry="47" fill="#40454a"/>
                        <ellipse cx="484" cy="135" rx="71" ry="47" fill="#83888b"/>
                        <path d="M441 136L464 109H503L529 134L505 162H466Z" fill="#32363a"/>
                        <path d="M464 134L478 116H505L516 137L500 152H472Z" fill="#777c80"/>
                    </g>
                    <!-- rear yoke -->
                    <path d="M648 120C665 75 690 38 725 38C760 38 780 48 800 57L1055 175V300L900 296L720 245Z" fill="url(#top)"/>
                    <path d="M788 55L770 95M655 118C680 92 720 85 770 95"/>
                    <path d="M785 92L975 150L905 296L710 242C750 210 785 150 785 92Z" fill="#697582"/>
                    <path d="M780 170C795 142 825 140 845 160C875 200 897 250 897 294L785 266C775 240 775 200 780 170Z" fill="#42484f"/>
                    <path d="M845 160C880 205 893 245 893 292" stroke-width="6"/>
                    <path d="M975 150C1010 160 1035 180 1030 205L1003 260C990 287 960 297 908 296Z" fill="#8b98a8"/>
                    <path d="M925 295L960 215C975 203 998 230 1000 264M985 155L915 295"/>
                    <path d="M650 122L785 92C785 150 750 210 710 242C670 240 640 240 605 246C640 225 655 190 657 160Z" fill="#8e9bac"/>
                    <path d="M785 92C825 110 840 135 822 155C800 170 780 165 778 155L785 92Z" fill="#5c6772"/>
                    <path d="M605 246C640 238 690 240 720 245L900 296L750 292C700 286 640 282 590 295C560 305 545 325 538 348C545 300 570 265 605 246Z" fill="#8996a5"/>
                    <path d="M697 242C685 255 680 270 677 284"/>
                    <!-- selected yoke -->
                    <path d="M525 370C528 330 560 300 600 292C650 283 700 290 750 293C820 298 920 300 950 296C985 290 1000 270 1008 250L1030 205C1035 190 1025 170 1010 152L1100 195L1295 300L1270 345V820L1055 692L600 475C560 455 525 420 525 370Z" fill="url(#blue)" stroke="#4aa6f5"/>
                    <path d="M527 370C530 330 560 302 600 294C650 285 700 292 750 295L800 568L600 473C560 453 527 420 527 370Z" fill="url(#nose)" stroke="none"/>
                    <path d="M1300 325L1270 370" stroke-width="12"/>
                    <g transform="rotate(22 656 412)">
                        <ellipse cx="656" cy="412" rx="78" ry="59" fill="url(#hole)" stroke="#6fb9f8"/>
                        <path d="M610 370C585 450 680 480 730 425" fill="#8c9197"/>
                        <path d="M625 362C610 425 680 450 722 385" fill="#565b60"/>
                        <path d="M640 358C635 400 680 420 710 375" fill="#a5aaaf"/>
                    </g>
                    <g stroke="#4aa6f5" stroke-width="3">
                        <path d="M648 120C665 75 690 38 725 38C760 38 780 48 800 57L1055 175"/>
                        <path d="M665 160C675 200 690 225 710 242L770 300L870 405C895 435 895 470 885 500L858 560C852 572 835 577 815 573"/>
                        <path d="M748 130C755 150 775 165 800 167C835 165 835 140 822 120C800 100 760 105 748 130"/>
                    </g>
                </g>
                <!-- axis triad -->
                <g stroke-width="2">
                    <path d="M250 557L245 546" stroke="#1c7a25"/><path d="M242 543l7 3-5 4z" fill="#1c7a25"/>
                    <path d="M250 557L240 560" stroke="#1b1fa5"/><path d="M234 560l7-4v7z" fill="#1b1fa5"/>
                    <path d="M250 557L247 565" stroke="#c32020"/><path d="M245 569l-1-7 6 2z" fill="#c32020"/>
                </g>
                <g class="axes"><text x="238" y="543" fill="#35a845">Y</text><text x="229" y="564" fill="#1b1fa5">Z</text><text x="242" y="573" fill="#d22">X</text></g>
            </svg>

            <div class="toolbar view-tools">
                <button aria-label="Zoom adatta"><svg class="icon"><use href="#zoom-fit"/></svg></button>
                <button aria-label="Zoom area"><svg class="icon"><use href="#zoom-area"/></svg></button>
                <button aria-label="Vista precedente"><svg class="icon"><use href="#wand"/></svg></button>
                <button aria-label="Sezione"><svg class="icon"><use href="#section"/></svg></button>
                <button aria-label="Orientamento"><svg class="icon"><use href="#views"/></svg></button>
                <button class="drop" aria-label="Altro"></button>
                <button aria-label="Stile"><svg class="icon"><use href="#cube"/></svg></button>
                <button class="drop" aria-label="Altro"></button>
                <button aria-label="Normale a"><svg class="icon"><use href="#normal"/></svg></button>
                <button aria-label="Nascondi"><svg class="icon"><use href="#glasses"/></svg></button>
                <button class="drop" aria-label="Altro"></button>
            </div>

            <div class="popups">
                <div class="shortcut">
                    <div class="toolbar">
                        <button aria-label="Apri parte"><svg class="icon"><use href="#folder-open"/></svg></button>
                        <button aria-label="Modifica parte"><svg class="icon"><use href="#part-ring"/></svg></button>
                        <button aria-label="Sopprimi"><svg class="icon"><use href="#gears"/></svg></button>
                        <button aria-label="Alleggerito"><svg class="icon faded"><use href="#gears"/></svg></button>
                        <button aria-label="Scambia"><svg class="icon"><use href="#swap"/></svg></button>
                        <button aria-label="Accoppia"><svg class="icon"><use href="#clip"/></svg></button>
                        <button aria-label="Nascondi"><svg class="icon"><use href="#hide"/></svg></button>
                        <button aria-label="Proprietà"><svg class="icon"><use href="#props"/></svg></button>
                    </div>
                    <div class="toolbar">
                        <button aria-label="Proprietà componente"><svg class="icon"><use href="#frame"/><use href="#tree-y"/></svg></button>
                        <button aria-label="Aspetto"><svg class="icon"><use href="#ball"/></svg></button>
                        <button class="drop" aria-label="Altro"></button>
                        <button aria-label="Copia aspetto"><svg class="icon"><use href="#balls"/></svg></button>
                    </div>
                    <div class="toolbar">
                        <button aria-label="Seleziona altro"><svg class="icon"><use href="#select-part"/></svg></button>
                        <button aria-label="Zoom selezione"><svg class="icon"><use href="#zoom-list"/></svg></button>
                        <button aria-label="Normale a"><svg class="icon"><use href="#normal"/></svg></button>
                        <button aria-label="Modifica funzione"><svg class="icon"><use href="#green-part"/></svg></button>
                        <button aria-label="Sopprimi funzione"><svg class="icon"><use href="#green-part"/></svg></button>
                    </div>
                </div>

                <div class="context-menu">
                    <button class="item"><i class="mark on"><svg class="icon"><use href="#marquee"/></svg></i><span>S<u>e</u>lezione con rettangolo</span></button>
                    <button class="item"><i class="mark"><svg class="icon"><use href="#lasso"/></svg></i><span>Se<u>l</u>ezione Lasso</span></button>
                    <button class="item"><i class="mark"><svg class="icon"><use href="#arrow-black"/></svg></i><span><u>I</u>nverti selezione</span></button>
                    <hr>
                    <button class="item"><i class="mark"></i><span><u>S</u>eleziona tangenza</span></button>
                    <hr>
                    <button class="item more"><i class="mark"></i><span>Imposta vista corrente come...</span></button>
                    <h2>Componente (DEFAULT-32)</h2>
                    <button class="item"><i class="mark"></i><span>Sal<u>v</u>a</span></button>
                    <button class="item"><i class="mark"></i><span>O<u>t</u>tenere permesso di scrittura</span></button>
                    <button class="item"><i class="mark"></i><span>Re<u>n</u>di virtuali</span></button>
                    <button class="item"><i class="mark"><svg class="icon"><use href="#config"/></svg></i><span><u>C</u>onfigura componente</span></button>
                    <button class="item"><i class="mark"></i><span><u>I</u>sola</span></button>
                    <button class="item more"><i class="mark"></i><span>Visualizzazione componente</span></button>
                    <button class="item highlighted"><i class="mark"></i><span>Fisso</span></button>
                    <button class="item"><i class="mark"><svg class="icon"><use href="#triad"/></svg></i><span>Sposta con terna</span></button>
                    <button class="item"><i class="mark"></i><span>Formare un nuovo sottoassieme</span></button>
                    <button class="item"><i class="mark"><svg class="icon"><use href="#replace"/></svg></i><span>Sostituisci componenti</span></button>
                    <button class="item"><i class="mark"><svg class="icon"><use href="#copy-part"/></svg></i><span>Copia con accoppiamenti</span></button>
                    <button class="item"><i class="mark"><svg class="icon"><use href="#cross"/></svg></i><span>Cancella</span></button>
                    <button class="item"><i class="mark"></i><span>Padre/Figlio...</span></button>
                    <button class="item"><i class="mark"></i><span>Aggiungi alle preferenze</span></button>
                    <button class="item more"><i class="mark"></i><span>Materiale</span></button>
                    <hr>
                    <h2>Funzione (Importato1)</h2>
                    <button class="item"><i class="mark"></i><span>Aggiungi alle preferenze</span></button>
                    <button class="item"><i class="mark"></i><span>DBCent: Mostra profile card</span></button>
                    <button class="item"><i class="mark"></i><span>DBCent: Cerca i componenti correlati</span></button>
                    <button class="item"><i class="mark"></i><span>DBCent: Sostituisci con componenti presenti in DBCent</span></button>
                    <hr>
                    <button class="show-all" aria-label="Mostra tutto"><svg viewBox="0 0 8 8"><path d="M2 1l2 2 2-2M2 4l2 2 2-2" fill="none" stroke="#222"/></svg></button>
                </div>
            </div>
        </section>
    </main>

    <footer>
        <div class="model-tabs">
            <button class="nav" disabled>|◂</button>
            <button class="nav" disabled>◂</button>
            <button class="nav" disabled>▸</button>
            <button class="nav" disabled>▸|</button>
            <button class="active">Modello</button>
            <button>Studio di movimento 1</button>
        </div>
        <div class="toolbar layers">
            <i class="grip"></i>
            <select aria-label="Livello"></select>
            <button aria-label="Livelli" disabled><svg class="icon"><use href="#cube-grey"/></svg></button>
            <i class="grip spaced"></i>
            <button aria-label="Proprietà livello" disabled><svg class="icon"><use href="#cube-grey"/></svg></button>
            <button aria-label="Colore linea" disabled><svg class="icon"><use href="#paint"/></svg></button>
            <button aria-label="Spessore linea" disabled><svg class="icon"><use href="#lines"/></svg></button>
            <button aria-label="Stile linea" disabled><svg class="icon"><use href="#dashes"/></svg></button>
            <button aria-label="Nascondi bordo" disabled><svg class="icon"><use href="#fit"/></svg></button>
            <button aria-label="Modalità colore"><svg class="icon"><use href="#ucs"/></svg></button>
            <span class="sep end"></span>
        </div>
        <div class="toolbar filters">
            <i class="grip"></i>
            <button aria-label="Filtri"><svg class="icon"><use href="#funnel-grey"/></svg></button>
            <button aria-label="Cancella filtri"><svg class="icon"><use href="#funnels-grey"/></svg></button>
            <button aria-label="Tutti i filtri"><svg class="icon"><use href="#funnels"/></svg></button>
            <button class="pressed" aria-label="Seleziona"><svg class="icon"><use href="#arrow"/></svg></button>
            <button class="drop boxed" aria-label="Altro"></button>
            <button aria-label="Inverti"><svg class="icon"><use href="#arrow-black"/></svg></button>
            <span class="sep wide"></span>
            <button aria-label="Filtra vertici"><svg class="icon"><use href="#s-dot"/><use href="#f"/></svg></button>
            <button aria-label="Filtra bordi"><svg class="icon"><use href="#s-edge"/><use href="#f"/></svg></button>
            <button aria-label="Filtra facce"><svg class="icon"><use href="#s-face"/><use href="#f"/></svg></button>
            <button aria-label="Filtra superfici"><svg class="icon"><use href="#s-surf"/><use href="#f"/></svg></button>
            <button aria-label="Filtra corpi"><svg class="icon"><use href="#s-body"/><use href="#f"/></svg></button>
            <button aria-label="Filtra assi"><svg class="icon"><use href="#s-line"/><use href="#f"/></svg></button>
            <button aria-label="Filtra piani"><svg class="icon"><use href="#s-plane"/><use href="#f"/></svg></button>
            <button aria-label="Filtra punti"><svg class="icon"><use href="#s-point"/><use href="#f"/></svg></button>
            <button aria-label="Filtra schizzi"><svg class="icon"><use href="#s-sketch"/><use href="#f"/></svg></button>
            <button aria-label="Filtra segmenti"><svg class="icon"><use href="#s-axes"/><use href="#f"/></svg></button>
            <button aria-label="Filtra punti medi"><svg class="icon"><use href="#s-mid"/><use href="#f"/></svg></button>
            <button aria-label="Filtra centri"><svg class="icon"><use href="#s-target"/><use href="#f"/></svg></button>
            <button aria-label="Filtra quote"><svg class="icon"><use href="#s-dim"/><use href="#f"/></svg></button>
            <button aria-label="Filtra linee"><svg class="icon"><use href="#s-pen"/><use href="#f"/></svg></button>
            <button aria-label="Filtra finiture"><svg class="icon"><use href="#s-check"/><use href="#f"/></svg></button>
            <button aria-label="Filtra tolleranze"><svg class="icon"><use href="#s-note"/><use href="#f"/></svg></button>
            <button aria-label="Filtra bollature"><svg class="icon"><use href="#s-bal"/><use href="#f"/></svg></button>
            <button aria-label="Filtra riferimenti"><svg class="icon"><use href="#s-datum"/><use href="#f"/></svg></button>
            <button aria-label="Filtra saldature"><svg class="icon"><use href="#s-weld"/><use href="#f"/></svg></button>
            <button aria-label="Filtra cordoni"><svg class="icon"><use href="#s-hatch"/><use href="#f"/></svg></button>
            <button aria-label="Filtra note"><svg class="icon"><use href="#s-bal"/><use href="#f"/></svg></button>
            <button aria-label="Filtra filettature"><svg class="icon"><use href="#s-u"/><use href="#f"/></svg></button>
            <button aria-label="Filtra blocchi"><svg class="icon"><use href="#s-box"/><use href="#f"/></svg></button>
            <button aria-label="Filtra masse"><svg class="icon"><use href="#s-mass"/><use href="#f"/></svg></button>
            <button aria-label="Filtra connessioni"><svg class="icon"><use href="#s-conn"/><use href="#f"/></svg></button>
            <button aria-label="Filtra percorsi"><svg class="icon"><use href="#s-conn"/><use href="#f"/></svg></button>
        </div>
    </footer>
</body>
</html>
```

FILE: styles.css
```
*,
*::before,
*::after {
    box-sizing: border-box;
}
body {
    margin: 0;
    height: 100vh;
    display: flex;
    flex-direction: column;
    overflow: hidden;
    font-family: Lato, "Noto Sans", sans-serif;
    font-size: 8px;
    line-height: 10px;
    color: #1c1e20;
    background: #dadfe2;
}
button {
    font: inherit;
    color: inherit;
    margin: 0;
    padding: 0;
    border: none;
    background: none;
    white-space: nowrap;
}
.sprite {
    position: absolute;
    width: 0;
    height: 0;
}
.icon {
    display: block;
    flex: none;
    width: 12px;
    height: 12px;
}
.faded {
    opacity: 0.5;
}

/* title bar */
.titlebar {
    display: flex;
    height: 19px;
    flex: none;
    border-bottom: 1px solid #55595d;
}
.logo {
    display: flex;
    align-items: center;
    gap: 3px;
    width: 85px;
    padding-left: 3px;
    border-left: 3px solid #d9251d;
    background: linear-gradient(#3c4146, #15191d);
    color: #fff;
    font-family: "Noto Sans", sans-serif;
}
.logo svg {
    width: 14px;
    height: 14px;
}
.menubar {
    display: flex;
    align-items: center;
    gap: 9px;
    width: 320px;
    padding-left: 11px;
    background: linear-gradient(#b4b6b8, #a4a6a8);
}
.titlebar h1 {
    margin: 0 45px 0 auto;
    align-self: center;
    font-size: 8px;
    font-weight: normal;
}

/* icon bars */
.toolbar {
    display: flex;
    align-items: center;
}
.toolbar button {
    display: flex;
    align-items: center;
    justify-content: center;
    width: 15px;
    height: 15px;
    flex: none;
}
.toolbar .drop {
    width: 8px;
}
.drop::after,
.caret {
    content: "";
    border: 2px solid transparent;
    border-top-color: #333;
    border-bottom: none;
}
.toolbar .pressed {
    border: 1px solid #7e8286;
    background: #b3b7ba;
}
.toolbar .boxed {
    border: 1px solid #c0c4c6;
}
.sep {
    width: 1px;
    height: 14px;
    margin-right: 1px;
    background: #85898c;
}
.quick {
    padding-left: 1px;
}
.assembly {
    height: 21px;
    flex: none;
    padding: 0 0 3px 2px;
    border-bottom: 1px solid #55595d;
}

/* left side */
.workspace {
    position: relative;
    display: flex;
    flex: 1;
    min-height: 0;
}
.side {
    position: relative;
    z-index: 1;
    display: flex;
    flex-direction: column;
    width: 224px;
    flex: none;
}
.command-tabs {
    display: flex;
    width: max-content;
    height: 12px;
}
.command-tabs button {
    padding: 0 4px;
    border: 1px solid #505458;
    border-top: none;
    border-left: none;
    background: #aeb1b4;
}
.command-tabs .active {
    border-bottom-color: #e2e7ea;
    background: #e2e7ea;
    font-weight: bold;
}
.panel {
    flex: 1;
    padding-top: 5px;
    border-right: 2px solid #4c5054;
    background: #e2e7ea;
}
.panel-tabs {
    display: flex;
    height: 15px;
    border-bottom: 1px solid #4c5054;
}
.panel-tabs button {
    display: flex;
    align-items: center;
    justify-content: center;
    width: 18px;
    border: 1px solid #4c5054;
    border-left: none;
    border-bottom: none;
    background: #b1b4b7;
}
.panel-tabs .active {
    background: #e2e7ea;
}
.panel-tabs .expand {
    margin-left: auto;
    width: 12px;
    border: none;
    background: none;
    font-size: 12px;
}
.filter {
    display: flex;
    align-items: center;
    gap: 1px;
    height: 12px;
    padding-left: 4px;
    border: 1px solid #8b9094;
    background: #fbfcfd;
}
.filter .icon {
    width: 10px;
    height: 10px;
}
.filter input {
    flex: 1;
    min-width: 0;
    height: 9px;
    border: none;
    outline: none;
    background: none;
    font: inherit;
}
.tree {
    display: grid;
    grid-auto-rows: minmax(0, 1fr);
    height: 285px;
    margin: 0;
    padding: 3px 0 0 1px;
    list-style: none;
    border-bottom: 2px solid #2b62a5;
}
.tree li {
    display: flex;
    align-items: center;
    white-space: nowrap;
}
.tree span {
    margin-left: 1px;
    padding: 0 1px;
}
.tree .selected {
    background: #3399f5;
    color: #fff;
}
.node,
.guide {
    width: 12px;
    height: 100%;
    flex: none;
    background: linear-gradient(#b2b7ba, #b2b7ba) 5px 0 / 1px 100% no-repeat;
}
.node {
    display: grid;
    place-items: center;
    background: linear-gradient(#b2b7ba, #b2b7ba) 5px 0 / 1px 100% no-repeat, linear-gradient(#b2b7ba, #b2b7ba) 6px 50% / 6px 1px no-repeat;
}
.node.last {
    background-size: 1px 50%, 6px 1px;
}
.guide + .guide {
    background: none;
}
.plus::before,
.minus::before {
    content: "";
    width: 7px;
    height: 7px;
    border: 1px solid #9ba0a4;
    background: linear-gradient(#444, #444) center / 3px 1px no-repeat, #eef1f3;
}
.plus::before {
    background: linear-gradient(#444, #444) center / 3px 1px no-repeat, linear-gradient(#444, #444) center / 1px 3px no-repeat, #eef1f3;
}
.collapse {
    position: absolute;
    left: 222px;
    top: 264px;
    display: flex;
    flex-direction: column;
    justify-content: center;
    align-items: center;
    gap: 3px;
    width: 7px;
    height: 26px;
    border: 1px solid #4c5054;
    border-left: none;
    background: #e2e7ea;
}
.collapse i {
    border: 2px solid transparent;
    border-right-color: #222;
    border-left: none;
}

/* graphics area */
.viewport {
    position: relative;
    flex: 1;
    min-width: 0;
    background: linear-gradient(#d0d4de, #d8dbe1 60%, #dde1e5);
}
.model {
    display: block;
    width: 100%;
    height: 100%;
}
.axes {
    font-size: 8px;
}
.view-tools {
    position: absolute;
    left: 358px;
    top: 1px;
}
.view-tools .drop {
    width: 9px;
}
.popups {
    position: absolute;
    left: 358px;
    top: 150px;
    width: 234px;
    display: flex;
    flex-direction: column;
    gap: 7px;
}
.shortcut,
.context-menu {
    border: 1px solid #43474b;
    background: #f1f1f5;
    box-shadow: 2px 2px 1px rgba(0,0,0,0.3);
}
.shortcut {
    height: 57px;
    padding: 2px 1px;
}
.context-menu {
    display: flex;
    flex-direction: column;
    padding-top: 2px;
    background: linear-gradient(90deg, #dfe2e5 18px, #b9bdc1 18px, #b9bdc1 19px, #f1f1f5 19px);
}
.item {
    position: relative;
    display: flex;
    align-items: center;
    height: 13px;
    text-align: left;
}
.item u {
    text-underline-offset: 1px;
}
.mark {
    display: grid;
    place-items: center;
    width: 18px;
    height: 13px;
    margin-right: 4px;
}
.mark.on {
    border: 1px solid #6e7276;
    background: #b9bcbf;
}
.more::after {
    content: "";
    margin: 0 5px 0 auto;
    border: 2px solid transparent;
    border-left-color: #222;
    border-right: none;
}
.highlighted {
    background: linear-gradient(#f1f1f5, #d9dbe3 50%, #f1f1f5);
}
.highlighted::before {
    content: "";
    position: absolute;
    left: -2px;
    top: -1px;
    width: 179px;
    height: 15px;
    border: 2px solid #cf2626;
}
.context-menu hr {
    width: calc(100% - 20px);
    margin: 3px 0 3px 20px;
    border: none;
    border-top: 1px solid #a9adb1;
}
.context-menu h2 {
    margin: 0;
    padding-left: 1px;
    height: 12px;
    font-size: 8px;
    line-height: 12px;
    background: linear-gradient(#c9cad1, #a3a5ae 50%, #d5d6dc);
}
.show-all {
    height: 15px;
}
.show-all svg {
    width: 8px;
    height: 8px;
}

/* bottom bars */
footer {
    flex: none;
    border-top: 1px solid #55595d;
}
.model-tabs {
    display: flex;
    height: 10px;
    background: #e3e7e9;
}
.model-tabs button {
    padding: 0 5px;
    border: 1px solid #505458;
    border-top: none;
    background: #b1b4b7;
    line-height: 9px;
}
.model-tabs .nav {
    width: 11px;
    padding: 0;
    border-color: #bfc3c6;
    color: #888;
    font-size: 7px;
}
.model-tabs .active {
    background: #e3e7e9;
    font-weight: bold;
}
.layers {
    height: 18px;
    border-bottom: 1px solid #b9bdc0;
}
.layers select {
    appearance: none;
    width: 64px;
    height: 13px;
    margin-right: 1px;
    border: 1px solid #bdc1c4;
    background: conic-gradient(from 135deg at 50% 100%, transparent 0) no-repeat, linear-gradient(#aaaeb1, #aaaeb1) right 4px center / 4px 2px no-repeat, #eff1f2;
    font: inherit;
}
.filters {
    height: 17px;
}
.grip {
    width: 2px;
    height: 14px;
    margin: 0 2px 0 3px;
    border-left: 1px dotted #666;
}
.layers .grip {
    margin-right: 5px;
}
.layers .spaced {
    margin-left: 6px;
    margin-right: 3px;
}
.wide {
    margin: 0 2px;
}
.end {
    margin-left: 4px;
    background: #b9bdc0;
}
```
